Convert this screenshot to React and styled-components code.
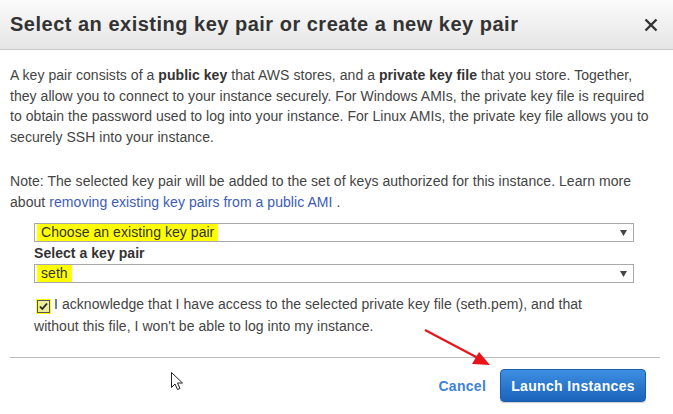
import React from 'react';
import styled, { createGlobalStyle } from 'styled-components';

const GlobalStyle = createGlobalStyle`
  html, body {
    margin: 0;
    padding: 0;
    background: #fff;
  }
  body {
    font-family: "Liberation Sans", Arial, sans-serif;
    color: #444;
    letter-spacing: 0.05px;
  }
`;

const Dialog = styled.div`
  position: relative;
  width: 673px;
  height: 414px;
  background: #fff;
  overflow: hidden;
`;

const Header = styled.div`
  display: flex;
  align-items: center;
  justify-content: space-between;
  height: 49px;
  padding: 0 15px 0 10px;
  background: linear-gradient(to bottom, #fbfbfb, #e5e5e5);
  border-bottom: 1px solid #c9c9c9;
`;

const Title = styled.h1`
  margin: 0;
  font-size: 20px;
  font-weight: 700;
  color: #333;
  letter-spacing: 0.5px;
`;

const Close = styled.span`
  display: flex;
  width: 14px;
  height: 14px;
`;

const Body = styled.div`
  padding: 15px 13px 0 10px;
  font-size: 14px;
  line-height: 20.5px;
`;

const Para = styled.p`
  margin: 0 0 ${(p) => p.gap || 0}px 0;
  white-space: nowrap;
`;

const Strong = styled.b`
  color: #333;
`;

const Link = styled.a`
  color: #3c5cb8;
  text-decoration: none;
  margin-left: 4px;
`;

const Form = styled.div`
  width: 600px;
  margin: 11px 0 0 24px;
`;

const SelectBox = styled.div`
  display: flex;
  align-items: center;
  justify-content: space-between;
  height: 17px;
  border: 1px solid #a9a9a9;
  padding: 0 6px 0 2px;
  background: #fff;
`;

const Highlight = styled.span`
  background: #ffff00;
  color: #333;
  padding: 0 4px;
  line-height: 17px;
`;

const Label = styled.div`
  font-weight: 700;
  color: #333;
  line-height: 22px;
`;

const Ack = styled.div`
  width: 585px;
  margin-top: 10px;
  line-height: 22px;
`;

const CheckMark = styled.span`
  display: inline-flex;
  align-items: center;
  justify-content: center;
  vertical-align: -2px;
  background: #ffff00;
  padding: 1px;
  margin: 0 3px 0 2px;
`;

const Box = styled.span`
  display: inline-flex;
  align-items: center;
  justify-content: center;
  width: 11px;
  height: 11px;
  border: 1px solid #555;
  background: #ecec9a;
`;

const Divider = styled.div`
  height: 1px;
  background: #bdbdbd;
  margin: 20px 0 0 0;
`;

const Footer = styled.div`
  display: flex;
  justify-content: flex-end;
  align-items: center;
  gap: 14px;
  padding: 11px 27px 0 0;
`;

const CancelLink = styled.a`
  font-size: 14px;
  font-weight: 700;
  color: #3f82d6;
  text-decoration: none;
  letter-spacing: 0.3px;
`;

const PrimaryButton = styled.button`
  height: 33px;
  padding: 0 10px;
  font-family: "Liberation Sans", Arial, sans-serif;
  font-size: 14px;
  font-weight: 700;
  letter-spacing: 0.35px;
  color: #fff;
  border: 1px solid #1b5eae;
  border-radius: 4px;
  background: linear-gradient(to bottom, #3d8fe2, #1b63bb);
  box-shadow: 0 1px 1px rgba(0, 0, 0, 0.2);
`;

const Overlay = styled.svg`
  position: absolute;
  left: 0;
  top: 0;
  pointer-events: none;
`;

const Caret = () => (
  <svg width="7" height="6" viewBox="0 0 7 6">
    <path d="M0 0h7L3.5 6z" fill="#444" />
  </svg>
);

const App = () => (
  <Dialog>
    <GlobalStyle />
    <Header>
      <Title>Select an existing key pair or create a new key pair</Title>
      <Close>
        <svg width="14" height="14" viewBox="0 0 14 14">
          <path d="M1.5 1.5l11 11M12.5 1.5l-11 11" stroke="#333" strokeWidth="2.4" />
        </svg>
      </Close>
    </Header>
    <Body>
      <Para gap={24}>
        A key pair consists of a <Strong>public key</Strong> that AWS stores, and a{' '}
        <Strong>private key file</Strong> that you store. Together,
        <br />
        they allow you to connect to your instance securely. For Windows AMIs, the private key
        file is required
        <br />
        to obtain the password used to log into your instance. For Linux AMIs, the private key
        file allows you to
        <br />
        securely SSH into your instance.
      </Para>
      <Para>
        Note: The selected key pair will be added to the set of keys authorized for this
        instance. Learn more
        <br />
        about
        <Link href="#">removing existing key pairs from a public AMI</Link> .
      </Para>
      <Form>
        <SelectBox>
          <Highlight>Choose an existing key pair</Highlight>
          <Caret />
        </SelectBox>
        <Label>Select a key pair</Label>
        <SelectBox>
          <Highlight>seth</Highlight>
          <Caret />
        </SelectBox>
        <Ack>
          <CheckMark>
            <Box>
              <svg width="9" height="9" viewBox="0 0 9 9">
                <path d="M1 4.5l2.3 2.5L8 1.5" stroke="#222" strokeWidth="1.8" fill="none" />
              </svg>
            </Box>
          </CheckMark>
          I acknowledge that I have access to the selected private key file (seth.pem), and that
          without this file, I won't be able to log into my instance.
        </Ack>
      </Form>
      <Divider />
    </Body>
    <Footer>
      <CancelLink href="#">Cancel</CancelLink>
      <PrimaryButton>Launch Instances</PrimaryButton>
    </Footer>
    <Overlay width="673" height="414" viewBox="0 0 673 414">
      <line x1="425" y1="330" x2="478" y2="358" stroke="#e8141a" strokeWidth="2.2" />
      <path d="M490 365L472 364L479 352z" fill="#e8141a" />
      <path
        d="M171.5 372.5v15l3.5-3.5 2.5 5.5 2.5-1-2.5-5.5h5z"
        fill="#fff"
        stroke="#222"
        strokeWidth="1"
        strokeLinejoin="round"
      />
    </Overlay>
  </Dialog>
);

export default App;
